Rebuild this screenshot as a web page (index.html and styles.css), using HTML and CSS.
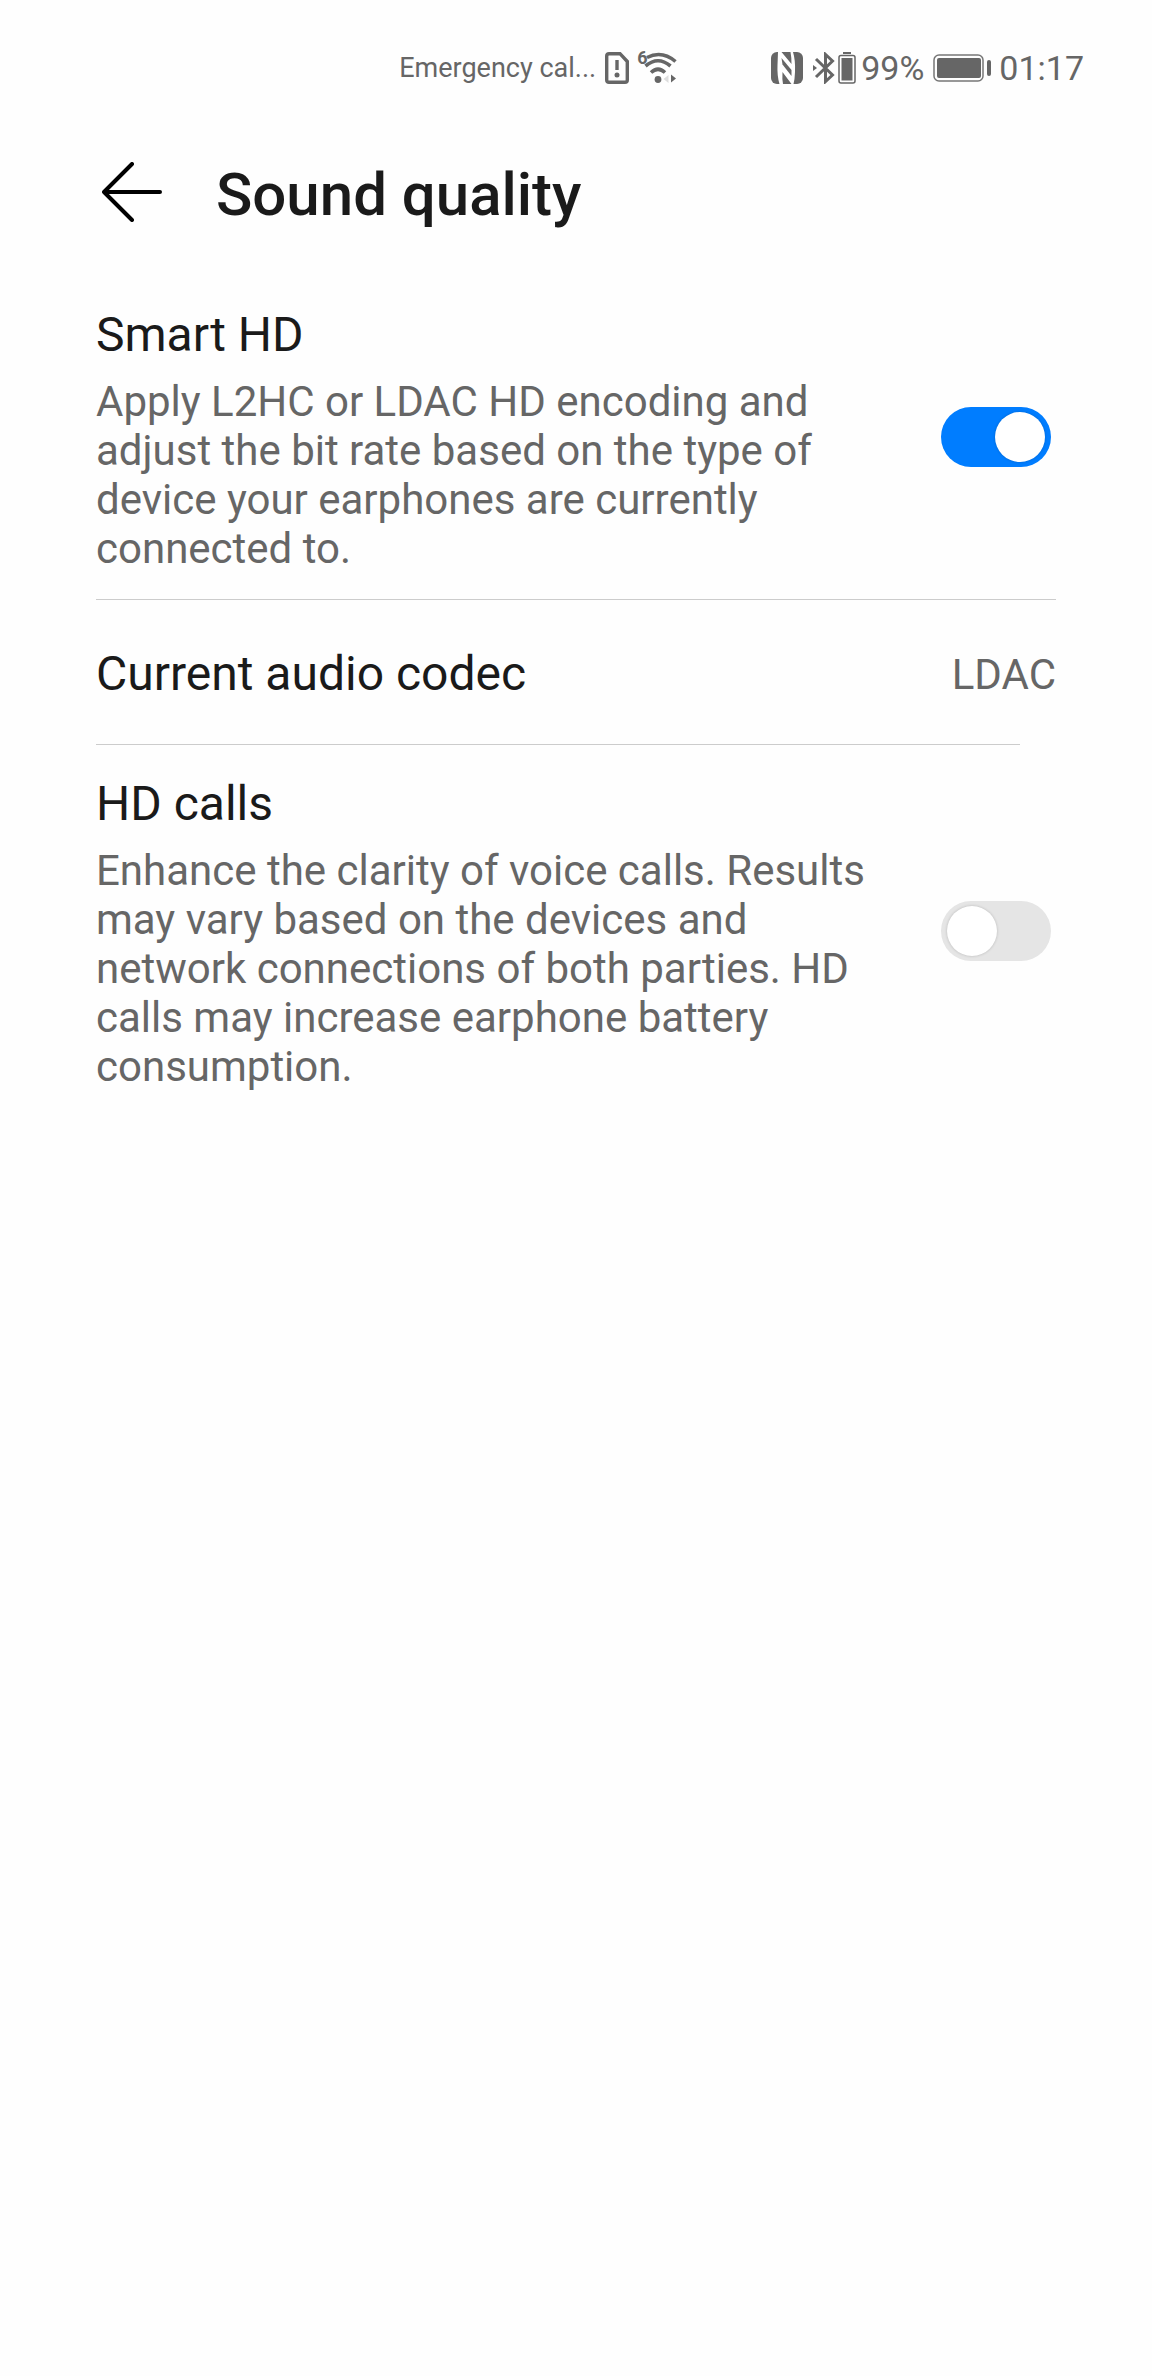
FILE: index.html
```html
<!DOCTYPE html>
<html lang="en">
<head>
<meta charset="UTF-8">
<meta name="viewport" content="width=device-width, initial-scale=1.0">
<title>Sound quality</title>
<link rel="stylesheet" href="styles.css">
</head>
<body>

<div class="status-bar">
  <div class="network">
    <span class="carrier">Emergency cal...</span>
    <!-- SIM -->
    <svg class="icon-sim" width="24" height="32" viewBox="0 0 24 32" fill="none" stroke="#666" stroke-width="3.400">
      <path d="M4 1.700H15L22.300 9.500V28Q22.300 30.300 20 30.300H4Q1.700 30.300 1.700 28V4Q1.700 1.700 4 1.700Z"/>
      <path d="M12 8V18"/>
      <circle cx="12" cy="23" r="2.500" fill="#666" stroke="none"/>
    </svg>
    <!-- Wi-Fi -->
    <span class="wifi">
      <svg width="40" height="34" viewBox="0 0 40 34" fill="none" stroke="#666" stroke-width="3.600">
        <path d="M10 6.500Q25 -1 38.500 10.500"/>
        <path d="M8.500 15Q21 4.500 33.500 15"/>
        <path d="M14 21.500Q21 15 28 21.500"/>
        <circle cx="21" cy="28.500" r="3.400" fill="#666" stroke="none"/>
        <path d="M31.500 24V32L26.500 28Z" fill="#ddd" stroke="none"/>
        <path d="M34 23.500L39 27.500L34 31.500Z" fill="#666" stroke="none"/>
      </svg>
      <span class="wifi-gen">6</span>
    </span>
  </div>
  <div class="system">
    <!-- NFC -->
    <svg width="32" height="32" viewBox="0 0 32 32">
      <rect width="32" height="32" rx="6" fill="#666"/>
      <path d="M7 0H10.500L20.500 12Q20.500 5 19.500 0H22Q24.500 8 24 20Q23.800 27 22.500 32H20.500L11.500 20Q11 27 12 32H8.500Q6 24 6.500 13Z" fill="#fff"/>
      <path d="M10.500 6L20.500 18V24L11.500 12.500Z" fill="#666"/>
    </svg>
    <!-- Bluetooth -->
    <svg class="icon-bt" width="22" height="32" viewBox="0 0 22 32" fill="none" stroke="#666" stroke-width="3">
      <path d="M3 7L19.500 23L12.500 29.500V2.500L19.500 9L3 25"/>
      <path d="M0 13L4 16L0 19Z" fill="#666" stroke="none"/>
    </svg>
    <svg class="icon-bt-battery" width="18" height="32" viewBox="0 0 18 32">
      <rect x="5" width="8" height="2" fill="#666"/>
      <rect x="1" y="3.500" width="16" height="27.500" rx="2" fill="none" stroke="#666" stroke-width="1.500"/>
      <rect x="3.500" y="6" width="11" height="22.500" fill="#666"/>
    </svg>
    <span class="percent">99%</span>
    <!-- Battery -->
    <svg class="icon-battery" width="58" height="28" viewBox="0 0 58 28">
      <rect x="1" y="1" width="49" height="26" rx="5" fill="none" stroke="#777" stroke-width="1.500"/>
      <rect x="4" y="4" width="44" height="20" rx="2" fill="#666"/>
      <rect x="54" y="6" width="4" height="16" rx="2" fill="#666"/>
    </svg>
    <span class="clock">01:17</span>
  </div>
</div>

<header class="header">
  <button class="btn-back" aria-label="Back">
    <svg width="60" height="60" viewBox="0 0 60 60" fill="none" stroke="#000" stroke-width="4" stroke-linecap="round" stroke-linejoin="round">
      <path d="M30 2L2 30L30 58M2 30H58"/>
    </svg>
  </button>
  <h1>Sound quality</h1>
</header>

<main class="settings">
  <div class="setting">
    <div class="setting-text">
      <label for="smart-hd">Smart HD</label>
      <p>Apply L2HC or LDAC HD encoding and adjust the bit rate based on the type of device your earphones are currently connected to.</p>
    </div>
    <input type="checkbox" class="switch" id="smart-hd" checked>
  </div>
  <hr>

  <div class="setting codec">
    <h2>Current audio codec</h2>
    <span class="value">LDAC</span>
  </div>
  <hr class="short">

  <div class="setting">
    <div class="setting-text">
      <label for="hd-calls">HD calls</label>
      <p>Enhance the clarity of voice calls. Results may vary based on the devices and network connections of both parties. HD calls may increase earphone battery consumption.</p>
    </div>
    <input type="checkbox" class="switch" id="hd-calls">
  </div>
</main>

</body>
</html>
```

FILE: styles.css
```css
* {
  box-sizing: border-box;
}

body {
  margin: 0;
  min-height: 100vh;
  background: #fefefe;
  color: #1a1a1a;
  font-family: Roboto, sans-serif;
}

/* Status bar */
.status-bar {
  display: flex;
  justify-content: flex-end;
  align-items: center;
  gap: 94px;
  height: 135px;
  padding-right: 68px;
  color: #666;
}

.network,
.system {
  display: flex;
  align-items: center;
}

.carrier {
  font-size: 27px;
}

.icon-sim {
  margin: 0 8px 0 9px;
}

.wifi {
  display: flex;
  position: relative;
}

.wifi-gen {
  position: absolute;
  top: -1px;
  left: 0;
  font-size: 18px;
  font-weight: bold;
  line-height: 16px;
}

.icon-bt {
  margin-left: 10px;
}

.icon-bt-battery {
  margin: 0 5px 0 3px;
}

.percent,
.clock {
  font-size: 34px;
}

.icon-battery {
  margin: 0 8px 0 9px;
}

/* Header */
.header {
  display: flex;
  align-items: center;
  gap: 54px;
  height: 120px;
  padding: 0 96px 0 102px;
}

.btn-back {
  display: flex;
  margin-bottom: 6px;
  padding: 0;
  border: none;
  background: none;
  cursor: pointer;
}

h1 {
  margin: 0;
  font-size: 60px;
  font-weight: 500;
  line-height: 70px;
}

/* Settings list */
.settings {
  padding: 21px 96px;
}

.setting {
  display: flex;
  justify-content: space-between;
  align-items: center;
  gap: 36px;
  padding: 31px 0 26px;
}

.codec {
  padding: 46px 0 42px;
}

.setting-text {
  flex: 1;
}

.setting label,
.setting h2 {
  display: block;
  margin: 0;
  font-size: 48px;
  font-weight: normal;
  line-height: 56px;
}

.setting p {
  margin: 14px 0 0;
  color: #666;
  font-size: 42px;
  line-height: 49px;
}

.value {
  color: #666;
  font-size: 42px;
  line-height: 49px;
}

hr {
  height: 1px;
  margin: 0;
  border: none;
  background: #ccc;
}

hr.short {
  margin-right: 36px;
}

.switch {
  appearance: none;
  flex: none;
  display: flex;
  align-items: center;
  width: 110px;
  height: 60px;
  margin: 0 5px 6px 0;
  padding: 0 6px;
  border-radius: 30px;
  background: #e5e5e5;
  cursor: pointer;
}

.switch::before {
  content: "";
  width: 50px;
  height: 50px;
  border-radius: 50%;
  background: #fff;
  box-shadow: 0 0 3px rgba(0,0,0,0.2);
}

.switch:checked {
  justify-content: flex-end;
  background: #007dff;
}
```
